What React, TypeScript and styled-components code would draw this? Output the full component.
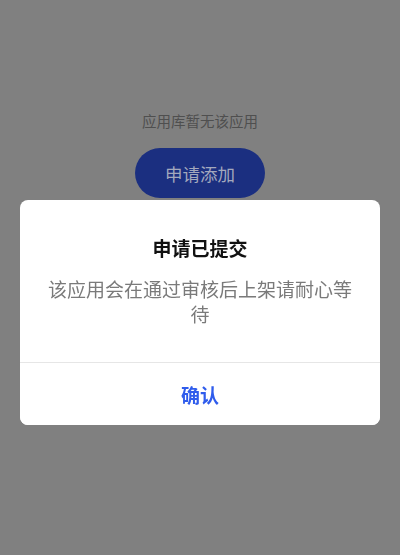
import React from "react";
import styled, { createGlobalStyle } from "styled-components";

const GlobalStyle = createGlobalStyle`
  html, body {
    margin: 0;
    padding: 0;
    background: #808080;
    font-family: "Noto Sans CJK SC", "Noto Sans", sans-serif;
  }
  * { box-sizing: border-box; }
`;

const Page = styled.div`
  width: 400px;
  height: 555px;
  display: flex;
  flex-direction: column;
  align-items: center;
  padding-top: 110px;
  background: #808080;
`;

const EmptyText = styled.div`
  font-size: 14.5px;
  line-height: 22px;
  color: #4f4f4f;
`;

const ApplyButton = styled.button`
  margin-top: 16px;
  width: 130px;
  height: 50px;
  border: none;
  border-radius: 25px;
  background: #1b2f80;
  color: #a3a8bd;
  font-family: inherit;
  font-size: 17.5px;
  padding: 0;
`;

const Overlay = styled.div`
  position: fixed;
  inset: 0;
  display: flex;
  flex-direction: column;
  align-items: stretch;
  padding: 200px 20px 0;
`;

const Dialog = styled.div`
  background: #ffffff;
  border-radius: 8px;
  overflow: hidden;
  display: flex;
  flex-direction: column;
`;

const Body = styled.div`
  padding: 35px 25px 36px;
  display: flex;
  flex-direction: column;
  align-items: center;
  gap: 15px;
  border-bottom: 1px solid #e6e6e6;
`;

const Title = styled.div`
  font-size: 19px;
  line-height: 26px;
  font-weight: 700;
  color: #111111;
`;

const Message = styled.div`
  font-size: 19px;
  line-height: 25px;
  color: #7a7a7a;
  text-align: center;
  width: 100%;
`;

const Footer = styled.button`
  height: 62px;
  border: none;
  background: #ffffff;
  color: #2f5cec;
  font-family: inherit;
  font-size: 19px;
  font-weight: 700;
  padding: 0;
`;

export default function App() {
  return (
    <>
      <GlobalStyle />
      <Page>
        <EmptyText>应用库暂无该应用</EmptyText>
        <ApplyButton>申请添加</ApplyButton>
      </Page>
      <Overlay>
        <Dialog>
          <Body>
            <Title>申请已提交</Title>
            <Message>该应用会在通过审核后上架请耐心等待</Message>
          </Body>
          <Footer>确认</Footer>
        </Dialog>
      </Overlay>
    </>
  );
}
